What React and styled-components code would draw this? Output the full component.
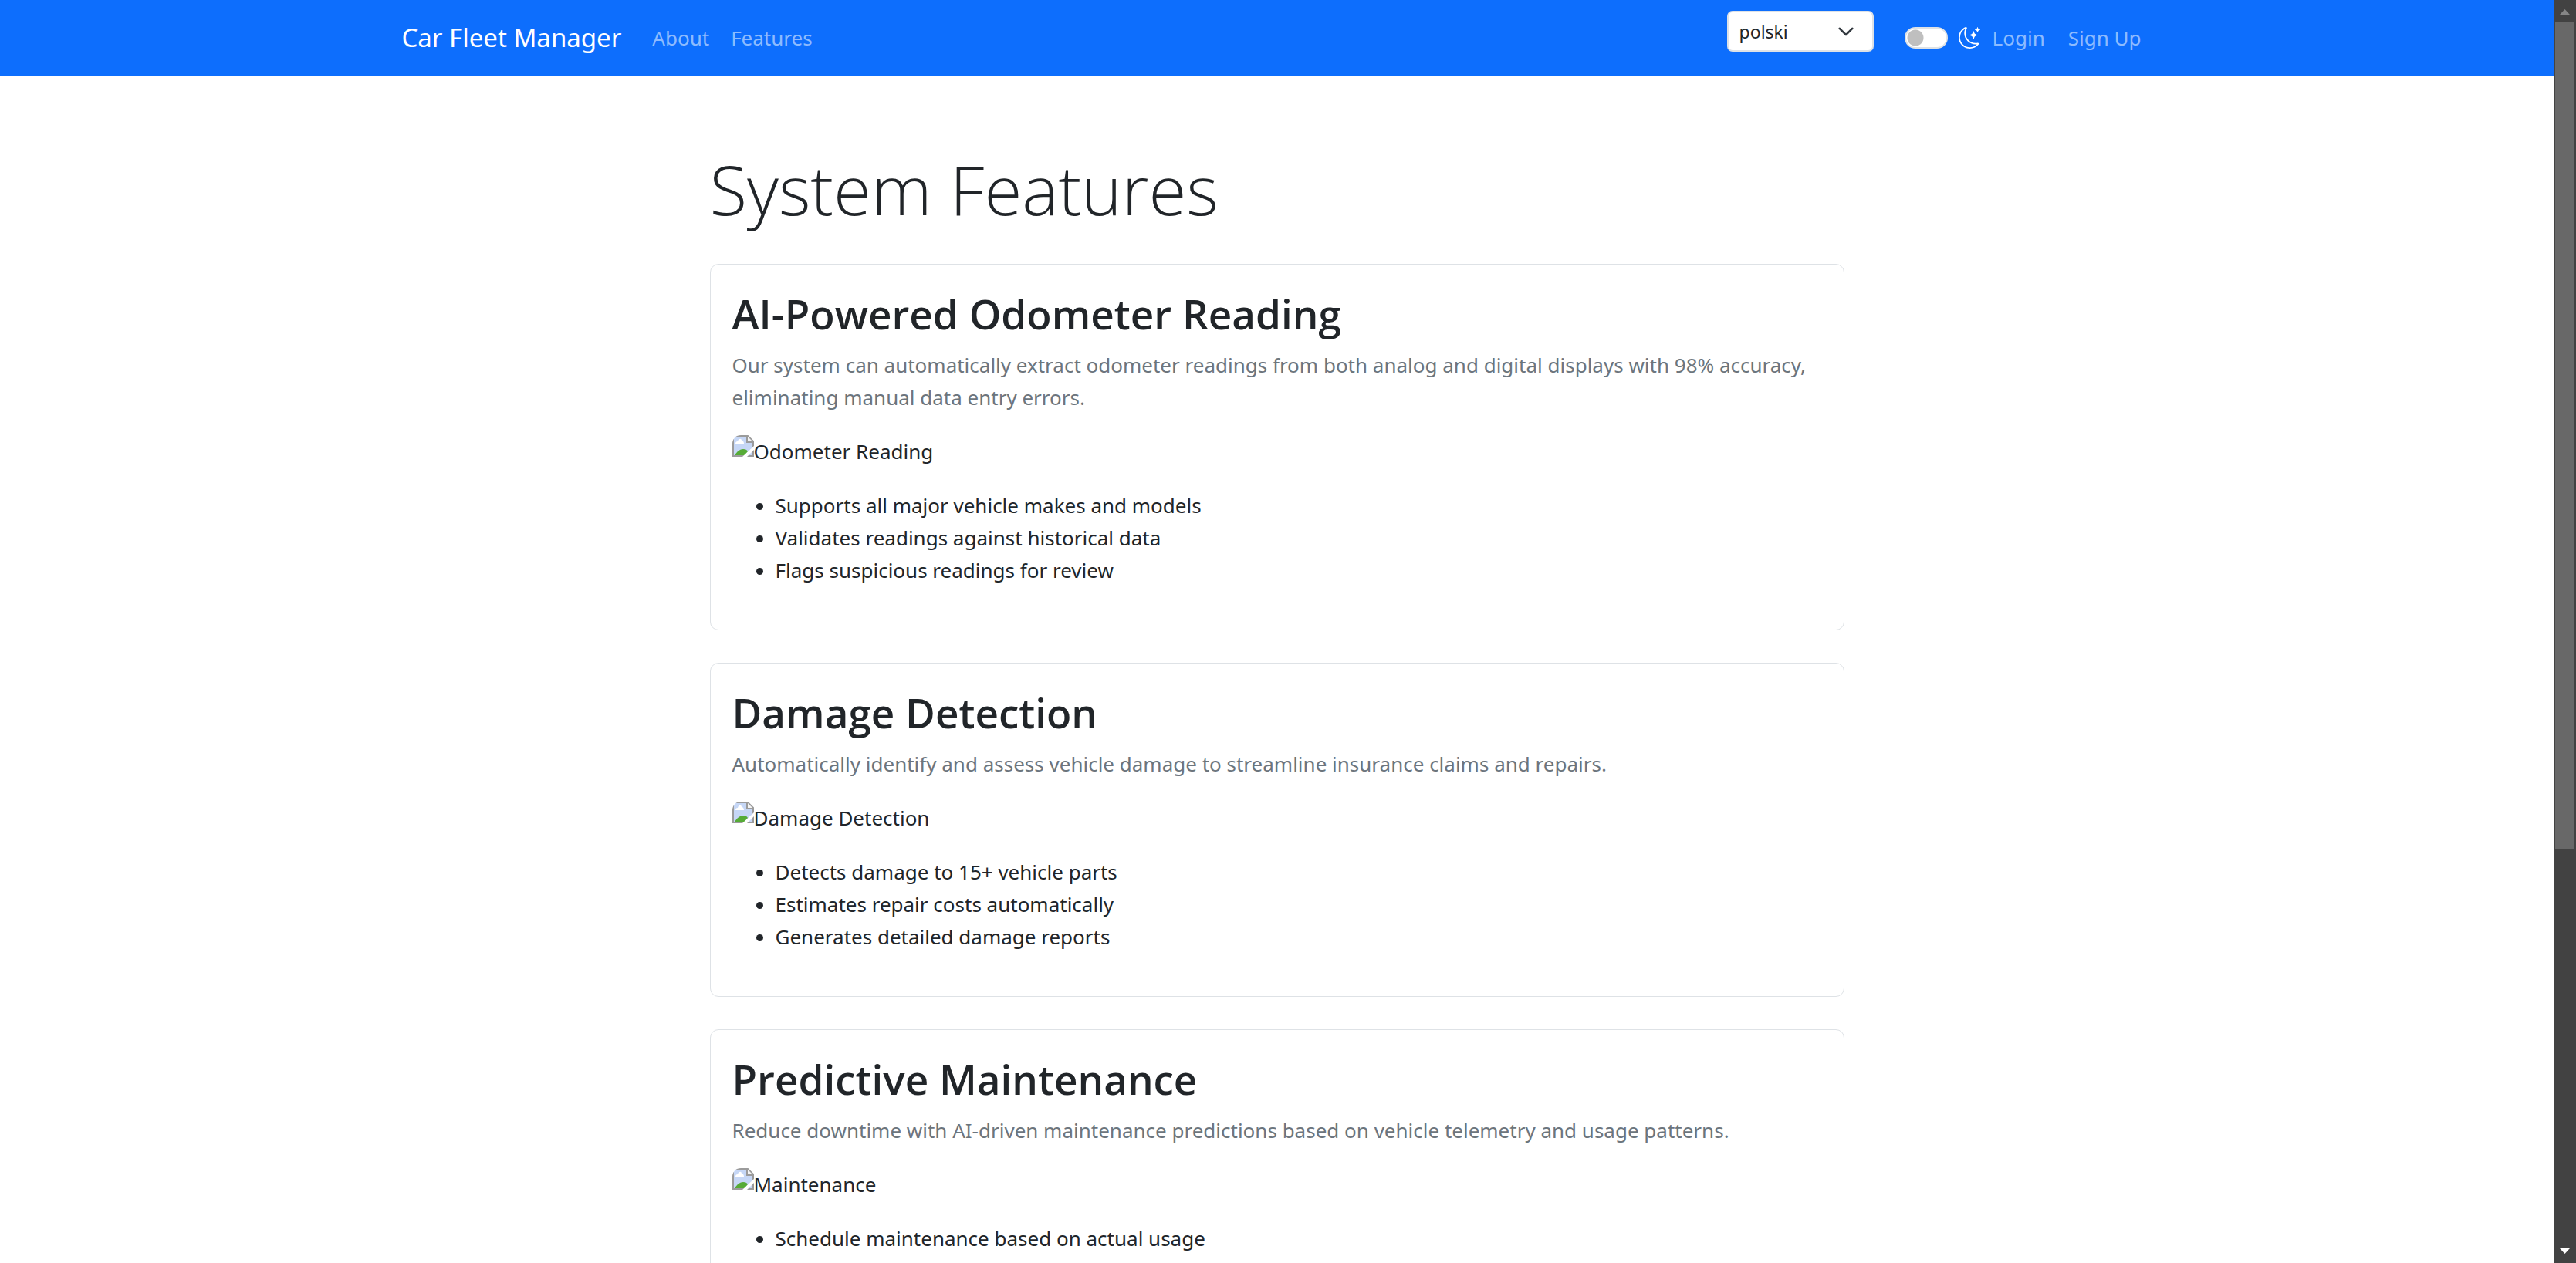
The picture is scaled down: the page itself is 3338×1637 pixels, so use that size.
import React from "react";
import styled, { createGlobalStyle } from "styled-components";
import { BsMoonStars } from "react-icons/bs";

const GlobalStyle = createGlobalStyle`
  *, *::before, *::after { box-sizing: border-box; }
  body {
    margin: 0;
    background: #fff;
    color: #212529;
    font-family: "Noto Sans", "Open Sans", sans-serif;
    font-size: 26px;
    line-height: 42px;
  }
`;

const Window = styled.div`
  display: flex;
  height: 100vh;
  overflow: hidden;
`;

const Page = styled.div`
  flex: 1;
  min-width: 0;
  overflow: hidden;
`;

const Navbar = styled.nav`
  background: #0d6efd;
  padding: 14px 0;
`;

const Container = styled.div`
  width: 100%;
  max-width: 2310px;
  margin: 0 auto;
  padding: 0 21px;
`;

const NavRow = styled(Container)`
  display: flex;
  align-items: center;
  min-height: 70px;
`;

const Brand = styled.a`
  margin-right: 26px;
  color: #fff;
  font-size: 33px;
  text-decoration: none;
  white-space: nowrap;
`;

const NavLinks = styled.div`
  display: flex;
`;

const NavLink = styled.a`
  padding: 14px;
  color: rgba(255, 255, 255, 0.55);
  text-decoration: none;
  white-space: nowrap;
`;

const NavTools = styled.div`
  display: flex;
  align-items: center;
  gap: 2px;
  margin-left: auto;
`;

const LanguageField = styled.div`
  display: grid;
  align-self: flex-start;
  align-items: center;
  width: 190px;
  margin-right: 38px;

  > * { grid-area: 1 / 1; }
`;

const LanguageSelect = styled.select`
  appearance: none;
  width: 100%;
  height: 53px;
  padding: 0 14px;
  border: 2px solid #dee2e6;
  border-radius: 7px;
  background: #fff;
  color: #212529;
  font: inherit;
  font-size: 23px;
`;

const Chevron = styled.svg`
  justify-self: end;
  width: 22px;
  height: 22px;
  margin-right: 25px;
  pointer-events: none;
`;

const ThemeSwitch = styled.label`
  display: flex;
  align-items: center;
  gap: 14px;
  color: #fff;

  svg { display: block; width: 28px; height: 28px; }
`;

const SwitchInput = styled.input`
  appearance: none;
  width: 56px;
  height: 28px;
  margin: 0;
  border: 2px solid #dee2e6;
  border-radius: 14px;
  background: radial-gradient(circle at 12px 12px, #bfbfbf 10px, #fff 11px);

  &:checked {
    background: radial-gradient(circle at 40px 12px, #0d6efd 10px, #fff 11px);
  }
`;

const Main = styled.main`
  width: 100%;
  max-width: 1512px;
  margin: 0 auto;
  padding: 88px 21px 84px;
`;

const Title = styled.h1`
  margin: 0 0 38px;
  font-family: "Open Sans", sans-serif;
  font-size: 89px;
  font-weight: 300;
  line-height: 118px;
`;

const Card = styled.section`
  margin-bottom: 42px;
  padding: 30px 28px 28px;
  border: 1px solid #dee2e6;
  border-radius: 11px;
`;

const CardTitle = styled.h2`
  margin: 0 0 12px;
  font-family: "Open Sans", sans-serif;
  font-size: 53px;
  font-weight: 600;
  line-height: 67px;
`;

const CardText = styled.p`
  margin: 0 0 28px;
  color: #6c757d;
`;

const MissingImage = styled.figure`
  display: flex;
  align-items: flex-start;
  margin: 0 0 28px;
`;

const ImageIcon = styled.svg`
  flex: none;
  width: 28px;
  height: 28px;
  border-radius: 11px 0 0 0;
`;

const FeatureList = styled.ul`
  margin: 0 0 28px;
  padding-left: 56px;
`;

const Scrollbar = styled.div`
  display: flex;
  flex-direction: column;
  width: 29px;
  padding: 0 2px;
  background: #424242;
`;

const ScrollArrow = styled.svg`
  flex: none;
  width: 25px;
  height: 29px;
`;

const ScrollTrack = styled.div`
  flex: 1;
`;

const ScrollThumb = styled.div`
  height: ${(p) => p.$share}%;
  background: #686868;
`;

const features = [
  {
    title: "AI-Powered Odometer Reading",
    text: "Our system can automatically extract odometer readings from both analog and digital displays with 98% accuracy, eliminating manual data entry errors.",
    image: "Odometer Reading",
    points: [
      "Supports all major vehicle makes and models",
      "Validates readings against historical data",
      "Flags suspicious readings for review",
    ],
  },
  {
    title: "Damage Detection",
    text: "Automatically identify and assess vehicle damage to streamline insurance claims and repairs.",
    image: "Damage Detection",
    points: [
      "Detects damage to 15+ vehicle parts",
      "Estimates repair costs automatically",
      "Generates detailed damage reports",
    ],
  },
  {
    title: "Predictive Maintenance",
    text: "Reduce downtime with AI-driven maintenance predictions based on vehicle telemetry and usage patterns.",
    image: "Maintenance",
    points: ["Schedule maintenance based on actual usage"],
  },
];

function BrokenImageIcon() {
  return (
    <ImageIcon viewBox="0 0 28 28" aria-hidden="true">
      <path d="M1 1H20L27 8V27H1Z" fill="#c6d7f6" stroke="#9b9b9b" strokeWidth="2" />
      <path d="M4 11c0-2 1-3 3-3 1-4 5-4 5-1 2 0 3 2 3 4Z" fill="#fff" />
      <path d="M3 26c3-5 7-8 11-8 3 0 5 1 6 3l-4 5Z" fill="#56ab37" />
      <path d="M19 1V9H27" fill="#f4f4f4" stroke="#9b9b9b" strokeWidth="2" />
      <path d="M28 14V19L19 28H13Z" fill="#fff" />
    </ImageIcon>
  );
}

function Feature({ title, text, image, points }) {
  return (
    <Card>
      <CardTitle>{title}</CardTitle>
      <CardText>{text}</CardText>
      <MissingImage>
        <BrokenImageIcon />
        <figcaption>{image}</figcaption>
      </MissingImage>
      <FeatureList>
        {points.map((point) => (
          <li key={point}>{point}</li>
        ))}
      </FeatureList>
    </Card>
  );
}

export default function App() {
  return (
    <>
      <GlobalStyle />
      <Window>
        <Page>
          <Navbar>
            <NavRow>
              <Brand href="#home">Car Fleet Manager</Brand>
              <NavLinks>
                <NavLink href="#about">About</NavLink>
                <NavLink href="#features">Features</NavLink>
              </NavLinks>
              <NavTools>
                <LanguageField>
                  <LanguageSelect aria-label="Language" defaultValue="pl">
                    <option value="pl">polski</option>
                  </LanguageSelect>
                  <Chevron viewBox="0 0 16 16" fill="none" aria-hidden="true">
                    <path
                      d="m2 5 6 6 6-6"
                      stroke="#343a40"
                      strokeWidth="2"
                      strokeLinecap="round"
                      strokeLinejoin="round"
                    />
                  </Chevron>
                </LanguageField>
                <ThemeSwitch>
                  <SwitchInput type="checkbox" role="switch" aria-label="Dark mode" />
                  <BsMoonStars aria-hidden="true" />
                </ThemeSwitch>
                <NavLink href="#login">Login</NavLink>
                <NavLink href="#signup">Sign Up</NavLink>
              </NavTools>
            </NavRow>
          </Navbar>
          <Main>
            <Title>System Features</Title>
            {features.map((feature) => (
              <Feature key={feature.title} {...feature} />
            ))}
          </Main>
        </Page>
        <Scrollbar aria-hidden="true">
          <ScrollArrow viewBox="0 0 25 29">
            <path d="M6 19H19L12.500 12Z" fill="#868686" />
          </ScrollArrow>
          <ScrollTrack>
            <ScrollThumb $share={67.9} />
          </ScrollTrack>
          <ScrollArrow viewBox="0 0 25 29">
            <path d="M6 10H19L12.500 17Z" fill="#fff" />
          </ScrollArrow>
        </Scrollbar>
      </Window>
    </>
  );
}
